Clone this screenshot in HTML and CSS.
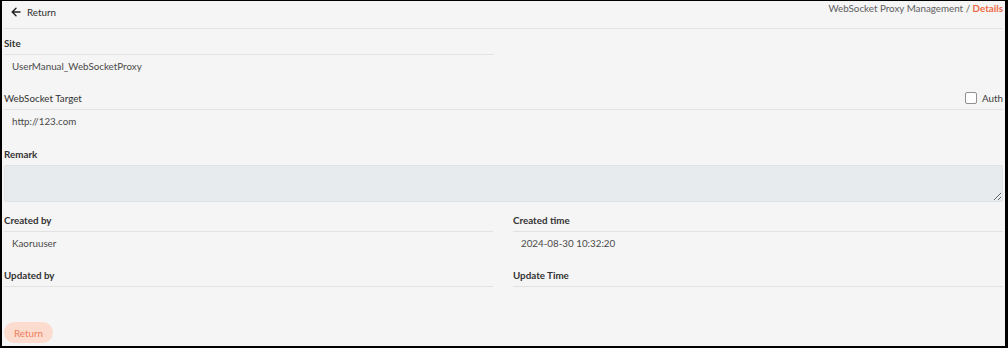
FILE: index.html
```html
<!DOCTYPE html>
<html lang="en">
<head>
<meta charset="utf-8">
<title>Details</title>
<link rel="stylesheet" href="styles.css">
</head>
<body>
<div class="frame">
  <header class="topbar">
    <a class="back" href="#">
      <svg class="back-icon" width="10" height="10" viewBox="0 0 10 10" aria-hidden="true">
        <path d="M9 5H1.5M5 1.2L1.2 5L5 8.8" fill="none" stroke="#222" stroke-width="1.4" stroke-linecap="round" stroke-linejoin="round"/>
      </svg>
      <span>Return</span>
    </a>
    <div class="crumbs">WebSocket Proxy Management / <b class="crumb-active">Details</b></div>
  </header>

  <section class="field half">
    <div class="label bold">Site</div>
    <div class="value">UserManual_WebSocketProxy</div>
  </section>

  <section class="field">
    <div class="label row">
      <span>WebSocket Target</span>
      <label class="auth"><span class="check"></span>Auth</label>
    </div>
    <div class="value">http://123.com</div>
  </section>

  <section class="field remark">
    <div class="label bold plain">Remark</div>
    <textarea class="area" disabled></textarea>
  </section>

  <div class="grid">
    <section class="field">
      <div class="label bold">Created by</div>
      <div class="value">Kaoruuser</div>
    </section>
    <section class="field">
      <div class="label bold">Created time</div>
      <div class="value">2024-08-30 10:32:20</div>
    </section>
    <section class="field">
      <div class="label bold">Updated by</div>
      <div class="value"></div>
    </section>
    <section class="field">
      <div class="label bold">Update Time</div>
      <div class="value"></div>
    </section>
  </div>

  <div class="actions">
    <button class="btn-return" type="button">Return</button>
  </div>
</div>
</body>
</html>
```

FILE: styles.css
```css
* { box-sizing: border-box; }
html, body {
  margin: 0;
  padding: 0;
  background: #000;
}
body {
  width: 1008px;
  height: 348px;
  overflow: hidden;
  font-family: "Lato", "Noto Sans", sans-serif;
  font-size: 9.8px;
  color: #4a4a4a;
}
.frame {
  width: 1008px;
  height: 348px;
  border-style: solid;
  border-color: #000;
  border-width: 1px 3px 2px 2px;
  background: #f5f5f5;
  padding: 0 2px 0 2px;
}
.topbar {
  height: 28px;
  border-bottom: 1px solid #e3e3e3;
  display: flex;
  justify-content: space-between;
  align-items: flex-start;
}
.back {
  display: flex;
  align-items: center;
  gap: 6px;
  padding: 0 0 0 7px;
  height: 22px;
  color: #2e2e2e;
  text-decoration: none;
}
.back-icon { display: block; }
.crumbs {
  line-height: 14px;
  color: #5e5e5e;
}
.crumb-active {
  color: #ee6a45;
  font-weight: 700;
}
.field {
  display: flex;
  flex-direction: column;
  margin-top: 8px;
}
.field.half {
  width: 490px;
  margin-top: 2px;
}
.label {
  line-height: 16px;
  padding: 4px 0 3px;
  color: #333;
  border-bottom: 1px solid #e2e2e2;
}
.label.bold { font-weight: 700; }
.label.plain { border-bottom: none; }
.label.row {
  display: flex;
  justify-content: space-between;
  align-items: center;
  font-weight: 400;
}
.auth {
  display: flex;
  align-items: center;
  gap: 5px;
  color: #3a3a3a;
}
.check {
  width: 12px;
  height: 12px;
  border: 1px solid #8f8f8f;
  border-radius: 2px;
  background: #fff;
}
.value {
  height: 23px;
  line-height: 23px;
  padding: 0 8px;
  color: #4a4a4a;
}
.remark { margin-top: 9px; }
.area {
  display: block;
  width: 100%;
  height: 37px;
  margin: 0;
  background: #e8ebee;
  border: 1px solid #e0e3e6;
  border-radius: 2px;
  resize: vertical;
  font-family: inherit;
}
.grid {
  display: grid;
  grid-template-columns: 489px 490px;
  column-gap: 20px;
  margin-top: -2px;
}
.actions {
  margin-top: 12px;
}
.btn-return {
  width: 49px;
  height: 21px;
  border: none;
  border-radius: 11px;
  background: #fcdccf;
  color: #ec805e;
  font-family: inherit;
  font-size: 9.8px;
  padding: 0;
}
```
